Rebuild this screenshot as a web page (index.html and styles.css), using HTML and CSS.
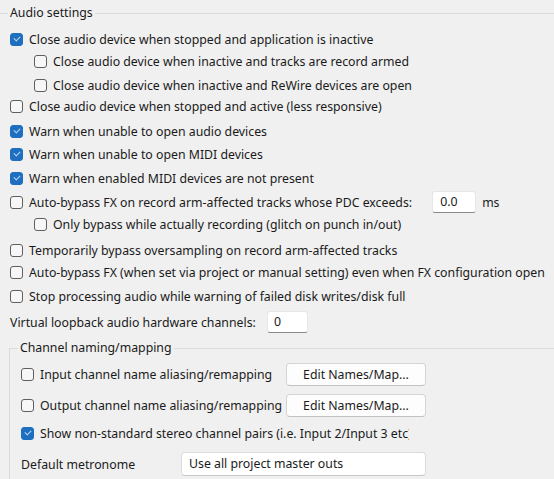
FILE: index.html
```html
<!DOCTYPE html>
<html lang="en">
<head>
  <meta charset="UTF-8">
  <title>Audio settings</title>
  <link rel="stylesheet" href="styles.css">
</head>
<body>
  <fieldset class="group main">
    <legend>Audio settings</legend>

    <div class="row"><span class="cb on"></span>Close audio device when stopped and application is inactive</div>
    <div class="row sub"><span class="cb"></span>Close audio device when inactive and tracks are record armed</div>
    <div class="row m2 sub"><span class="cb"></span>Close audio device when inactive and ReWire devices are open</div>
    <div class="row up1"><span class="cb"></span>Close audio device when stopped and active (less responsive)</div>
    <div class="row m3"><span class="cb on"></span>Warn when unable to open audio devices</div>
    <div class="row m1"><span class="cb on"></span>Warn when unable to open MIDI devices</div>
    <div class="row m2"><span class="cb on"></span>Warn when enabled MIDI devices are not present</div>
    <div class="row m2"><span class="cb"></span>Auto-bypass FX on record arm-affected tracks whose PDC exceeds:
      <span class="field pdc">0.0</span><span class="unit">ms</span></div>
    <div class="row sub"><span class="cb"></span>Only bypass while actually recording (glitch on punch in/out)</div>
    <div class="row m4"><span class="cb"></span>Temporarily bypass oversampling on record arm-affected tracks</div>
    <div class="row"><span class="cb"></span>Auto-bypass FX (when set via project or manual setting) even when FX configuration open</div>
    <div class="row m2"><span class="cb"></span>Stop processing audio while warning of failed disk writes/disk full</div>
    <div class="row m4">Virtual loopback audio hardware channels:<span class="field chans">0</span></div>

    <fieldset class="group inner">
      <legend>Channel naming/mapping</legend>
      <div class="row first"><span class="cb"></span><span class="label">Input channel name aliasing/remapping</span><span class="btn">Edit Names/Map...</span></div>
      <div class="row m3"><span class="cb"></span><span class="label">Output channel name aliasing/remapping</span><span class="btn">Edit Names/Map...</span></div>
      <div class="row"><span class="cb on"></span><span class="clip">Show non-standard stereo channel pairs (i.e. Input 2/Input 3 etc)</span></div>
      <div class="row m3"><span class="metro">Default metronome</span><span class="field combo">Use all project master outs</span></div>
    </fieldset>
  </fieldset>
</body>
</html>
```
FILE: styles.css
```css
body {
  margin: 0;
  background: #f0f0f0;
  color: #1a1a1a;
  font-family: "Noto Sans", "Segoe UI", sans-serif;
  font-size: 12.3px;
  overflow: hidden;
}

.group {
  margin: 0;
  padding: 0;
  border: none;
  border-top: 1px solid #dcdcdc;
  min-width: 0;
}

.group legend {
  padding: 0 2px;
  line-height: 16px;
}

.main {
  margin-top: 5px;
  margin-left: -2px;
  padding: 7px 0 0 12px;
}

.main > legend {
  margin-left: -2px;
}

.row {
  display: flex;
  align-items: center;
  height: 22px;
  white-space: nowrap;
}

.m1 { margin-top: 1px; }
.m2 { margin-top: 2px; }
.m3 { margin-top: 3px; }
.m4 { margin-top: 4px; }
.up1 { margin-top: -1px; }

.sub {
  padding-left: 24px;
}

.cb {
  flex: none;
  box-sizing: border-box;
  width: 13px;
  height: 13px;
  margin-right: 6px;
  border: 1px solid #5f5f5f;
  border-radius: 3px;
  background: #f7f7f7;
  position: relative;
}

.cb.on {
  border-color: #1f6fc0;
  background: #1f6fc0;
}

.cb.on::after {
  content: "";
  position: absolute;
  left: 3px;
  top: 2px;
  width: 5px;
  height: 3px;
  border-left: 1.3px solid #b9d5f2;
  border-bottom: 1.3px solid #b9d5f2;
  transform: rotate(-45deg);
}

.field {
  box-sizing: border-box;
  height: 22px;
  line-height: 20px;
  padding: 0 6px;
  background: #fff;
  border: 1px solid #e6e6e6;
  border-bottom-color: #8a8a8a;
  border-radius: 3px;
}

.pdc {
  width: 44px;
  margin-left: 20px;
  padding-left: 7px;
}

.unit {
  margin-left: 6px;
}

.chans {
  width: 41px;
  margin-left: 11px;
  padding-left: 6px;
}

.inner {
  margin-top: 7px;
  margin-left: -1px;
  border-left: 1px solid #dcdcdc;
  padding: 0 0 0 11px;
  height: 140px;
}

.inner > legend {
  margin-left: -3px;
}

.inner .row {
  height: 28px;
}

.inner .first {
  margin-top: 4px;
}

.label {
  width: 246px;
}

.btn {
  box-sizing: border-box;
  width: 140px;
  height: 23px;
  line-height: 21px;
  text-align: center;
  background: #fdfdfd;
  border: 1px solid #d5d5d5;
  border-bottom-color: #c2c2c2;
  border-radius: 4px;
}

.clip {
  width: 369px;
  overflow: hidden;
}

.metro {
  width: 160px;
}

.combo {
  width: 245px;
  height: 24px;
  line-height: 22px;
  padding-left: 7px;
  border-color: #dcdcdc;
  border-bottom-color: #c8c8c8;
  border-radius: 4px;
}
```
